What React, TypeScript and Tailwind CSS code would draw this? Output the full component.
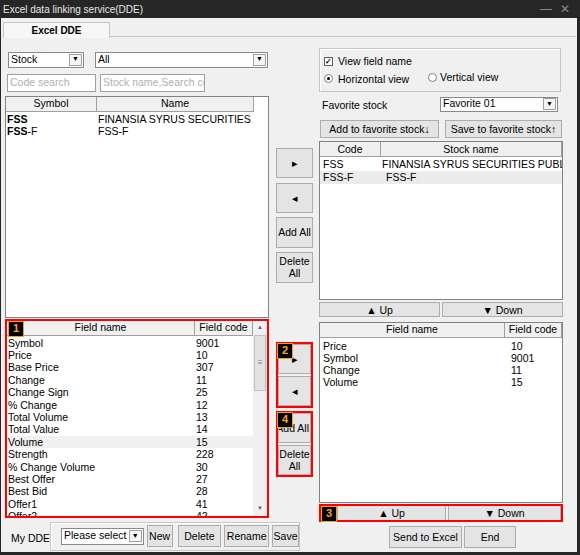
import React from 'react';

const font = "font-['Liberation_Sans',Arial,sans-serif]";

const Btn: React.FC<{ className?: string; children?: React.ReactNode }> = ({ className = '', children }) => (
  <div className={`flex items-center justify-center bg-[#e4e4e4] border border-[#adadad] text-[10.5px] text-black leading-[12px] text-center whitespace-nowrap overflow-hidden ${className}`}>
    {children}
  </div>
);

const Select: React.FC<{ className?: string; value: string }> = ({ className = '', value }) => (
  <div className={`flex items-center bg-white border border-[#8a8a8a] text-[10.5px] text-black ${className}`}>
    <span className="flex-1 pl-[2px] whitespace-nowrap overflow-hidden">{value}</span>
    <span className="w-[13px] h-[12px] mr-[1px] flex items-center justify-center border border-[#a0a0a0] bg-[#f4f4f4] text-[7px]">▼</span>
  </div>
);

const Badge: React.FC<{ n: string; className?: string }> = ({ n, className = '' }) => (
  <span className={`absolute z-10 w-[16px] h-[16px] flex items-center justify-center bg-black border border-[#f0a020] text-[#ffa020] text-[11px] font-bold ${className}`}>
    {n}
  </span>
);

const leftFields: [string, string][] = [
  ['Symbol', '9001'],
  ['Price', '10'],
  ['Base Price', '307'],
  ['Change', '11'],
  ['Change Sign', '25'],
  ['% Change', '12'],
  ['Total Volume', '13'],
  ['Total Value', '14'],
  ['Volume', '15'],
  ['Strength', '228'],
  ['% Change Volume', '30'],
  ['Best Offer', '27'],
  ['Best Bid', '28'],
  ['Offer1', '41'],
  ['Offer2', '42'],
];

const rightFields: [string, string][] = [
  ['Price', '10'],
  ['Symbol', '9001'],
  ['Change', '11'],
  ['Volume', '15'],
];

const Head: React.FC<{ className?: string; children?: React.ReactNode }> = ({ className = '', children }) => (
  <div className={`h-[15px] flex items-center justify-center bg-[#f0f0f0] border-r border-b border-[#a0a0a0] text-[10.5px] ${className}`}>
    {children}
  </div>
);

export default function App() {
  return (
    <div className={`w-[580px] h-[555px] bg-[#262626] flex flex-col ${font} text-black`}>
      {/* title bar */}
      <div className="h-[18px] flex items-center pl-[3px] pr-[10px] text-[10px] text-[#e6e6e6]">
        <span className="flex-1">Excel data linking service(DDE)</span>
        <span className="text-[#8a8a8a] text-[12px] mr-[8px] leading-none">—</span>
        <span className="text-[#8a8a8a] text-[12px] leading-none">✕</span>
      </div>

      <div className="ml-[1px] w-[576px] h-[534px] bg-[#f0f0f0] flex flex-col">
        {/* tabs */}
        <div className="h-[19px] flex items-end pl-[2px] pr-[1px] mt-[1px]">
          <div className="w-[107px] h-[16px] bg-[#f7f7f7] border border-b-0 border-[#c4c4c4] flex items-center justify-center text-[10px] font-bold">
            Excel DDE
          </div>
          <div className="flex-1 border-b border-[#c8c8c8] h-[1px] mb-[1px]" />
        </div>

        <div className="flex h-[484px]">
          {/* left column */}
          <div className="ml-[4px] w-[264px] flex flex-col">
            <div className="mt-[14px] flex pl-[3px] h-[16px]">
              <Select className="w-[76px]" value="Stock" />
              <Select className="w-[173px] ml-[11px]" value="All" />
            </div>
            <div className="mt-[6px] flex pl-[2px] h-[18px]">
              <div className="w-[89px] bg-white border border-[#a0a0a0] text-[10.5px] text-[#b0b0b0] flex items-center pl-[2px]">Code search</div>
              <div className="w-[105px] ml-[4px] bg-white border border-[#a0a0a0] text-[10.5px] text-[#b0b0b0] flex items-center pl-[2px] whitespace-nowrap overflow-hidden">Stock name,Search code</div>
            </div>
            <div className="mt-[4px] h-[222px] bg-white border border-[#828282] flex flex-col overflow-hidden">
              <div className="flex">
                <Head className="w-[91px]">Symbol</Head>
                <Head className="w-[157px]">Name</Head>
              </div>
              <div className="mt-[1px] text-[10.5px] leading-[12px]">
                <div className="flex h-[12px]">
                  <span className="w-[92px] pl-[1px] font-bold">FSS</span>
                  <span className="whitespace-nowrap overflow-hidden w-[156px]">FINANSIA SYRUS SECURITIES PUBLIC</span>
                </div>
                <div className="flex h-[12px]">
                  <span className="w-[92px] pl-[1px]"><b>FSS</b>-F</span>
                  <span>FSS-F</span>
                </div>
              </div>
            </div>
            {/* field list 1 */}
            <div className="relative mt-[1px] h-[199px] border-2 border-[#ff0000] bg-white flex overflow-hidden">
              <Badge n="1" className="left-[1px] top-[0px]" />
              <div className="flex-1 flex flex-col overflow-hidden">
                <div className="flex">
                  <Head className="w-[188px]">Field name</Head>
                  <Head className="w-[58px]">Field code</Head>
                </div>
                <div className="mt-[1px] text-[10.5px]">
                  {leftFields.map(([n, c]) => (
                    <div key={n} className={`flex h-[12.4px] leading-[12.4px] ${n === 'Volume' ? 'bg-[#f0f0f0]' : ''}`}>
                      <span className="w-[189px] pl-[1px] whitespace-nowrap">{n}</span>
                      <span>{c}</span>
                    </div>
                  ))}
                </div>
              </div>
              <div className="w-[14px] bg-[#f0f0f0] flex flex-col items-center">
                <span className="h-[14px] text-[6px] text-[#606060] flex items-center">▲</span>
                <div className="w-[12px] h-[56px] bg-[#e2e2e2] border border-[#c0c0c0] flex items-center justify-center text-[8px] text-[#808080]">≡</div>
                <div className="flex-1" />
                <span className="h-[14px] text-[6px] text-[#606060] flex items-center">▼</span>
              </div>
            </div>
          </div>

          {/* middle column */}
          <div className="ml-[7px] w-[37px] flex flex-col">
            <Btn className="mt-[110px] h-[30px] text-[7px]">▸</Btn>
            <Btn className="mt-[5px] h-[30px] text-[7px]">◂</Btn>
            <Btn className="mt-[4px] h-[31px]">Add All</Btn>
            <Btn className="mt-[4px] h-[31px]">Delete<br />All</Btn>
            <div className="relative mt-[59px] h-[66px] border-2 border-[#ff0000] flex flex-col gap-[2px]">
              <Badge n="2" className="left-[-1px] top-[-1px]" />
              <Btn className="flex-1 text-[7px]">▸</Btn>
              <Btn className="flex-1 text-[7px]">◂</Btn>
            </div>
            <div className="relative mt-[3px] h-[66px] border-2 border-[#ff0000] flex flex-col gap-[2px]">
              <Badge n="4" className="left-[-1px] top-[-1px]" />
              <Btn className="flex-1 justify-end pr-[1px]">Add All</Btn>
              <Btn className="flex-1">Delete<br />All</Btn>
            </div>
          </div>

          {/* right column */}
          <div className="ml-[6px] w-[244px] flex flex-col">
            <div className="mt-[10px] w-[242px] h-[44px] border border-[#c4c4c4] shadow-[inset_1px_1px_0_#ffffff] text-[10.5px] flex flex-col pl-[4px]">
              <div className="mt-[6px] flex items-center h-[14px]">
                <span className="w-[9px] h-[9px] border border-[#606060] bg-white flex items-center justify-center text-[8px] leading-none font-bold">✓</span>
                <span className="ml-[5px]">View field name</span>
              </div>
              <div className="mt-[3px] flex items-center h-[14px]">
                <span className="w-[9px] h-[9px] rounded-full border border-[#808080] bg-white flex items-center justify-center">
                  <span className="w-[3px] h-[3px] rounded-full bg-black" />
                </span>
                <span className="ml-[5px] mt-[2px] w-[90px]">Horizontal view</span>
                <span className="w-[9px] h-[9px] rounded-full border border-[#808080] bg-white -mt-[2px]" />
                <span className="ml-[3px] -mt-[1px]">Vertical view</span>
              </div>
            </div>
            <div className="mt-[5px] flex items-center h-[15px] text-[10.5px]">
              <span className="ml-[3px] w-[118px] mt-[3px]">Favorite stock</span>
              <Select className="w-[118px] h-[15px]" value="Favorite 01" />
            </div>
            <div className="mt-[8px] flex h-[19px]">
              <Btn className="ml-[1px] w-[119px]">Add to favorite stock↓</Btn>
              <Btn className="ml-[6px] w-[117px]">Save to favorite stock↑</Btn>
            </div>
            <div className="mt-[3px] h-[159px] bg-white border border-[#828282] flex flex-col overflow-hidden">
              <div className="flex">
                <Head className="w-[61px]">Code</Head>
                <Head className="flex-1">Stock name</Head>
              </div>
              <div className="mt-[1px] text-[10.5px]">
                <div className="flex h-[13px] leading-[13px]">
                  <span className="w-[66px] pl-[3px]">FSS</span>
                  <span className="whitespace-nowrap overflow-hidden">FINANSIA SYRUS SECURITIES PUBL...</span>
                </div>
                <div className="flex h-[13px] leading-[13px] bg-[#ececec]">
                  <span className="w-[66px] pl-[3px]">FSS-F</span>
                  <span>FSS-F</span>
                </div>
              </div>
            </div>
            <div className="mt-[2px] flex h-[15px] gap-[2px]">
              <Btn className="w-[121px]">▲ Up</Btn>
              <Btn className="flex-1">▼ Down</Btn>
            </div>
            <div className="mt-[5px] h-[181px] bg-white border border-[#828282] flex flex-col overflow-hidden">
              <div className="flex">
                <Head className="w-[185px]">Field name</Head>
                <Head className="flex-1">Field code</Head>
              </div>
              <div className="mt-[2px] text-[10.5px]">
                {rightFields.map(([n, c]) => (
                  <div key={n} className="flex h-[12px] leading-[12px]">
                    <span className="w-[191px] pl-[3px]">{n}</span>
                    <span>{c}</span>
                  </div>
                ))}
              </div>
            </div>
            <div className="relative mt-[1px] h-[18px] border-2 border-[#ff0000] flex">
              <Badge n="3" className="left-[0px] top-[0px] h-[14px]" />
              <Btn className="ml-[16px] w-[109px] border-y-0">▲ Up</Btn>
              <Btn className="ml-[2px] flex-1 border-y-0">▼ Down</Btn>
            </div>
          </div>
        </div>

        {/* bottom bar */}
        <div className="flex items-start text-[10.5px] h-[31px]">
          <span className="ml-[10px] mt-[9px] w-[39px] whitespace-nowrap">My DDE</span>
          <div className="h-[29px] w-[250px] border border-[#c8c8c8] shadow-[inset_1px_1px_0_#ffffff] flex items-center pl-[10px] gap-[3px]">
            <Select className="w-[83px] h-[17px]" value="Please select" />
            <Btn className="w-[26px] h-[22px]">New</Btn>
            <Btn className="ml-[2px] w-[44px] h-[22px]">Delete</Btn>
            <Btn className="w-[45px] h-[22px]">Rename</Btn>
            <Btn className="w-[27px] h-[22px]">Save</Btn>
          </div>
          <Btn className="ml-[89px] mt-[4px] w-[73px] h-[22px]">Send to Excel</Btn>
          <Btn className="ml-[2px] mt-[4px] w-[52px] h-[22px]">End</Btn>
        </div>
      </div>
    </div>
  );
}
